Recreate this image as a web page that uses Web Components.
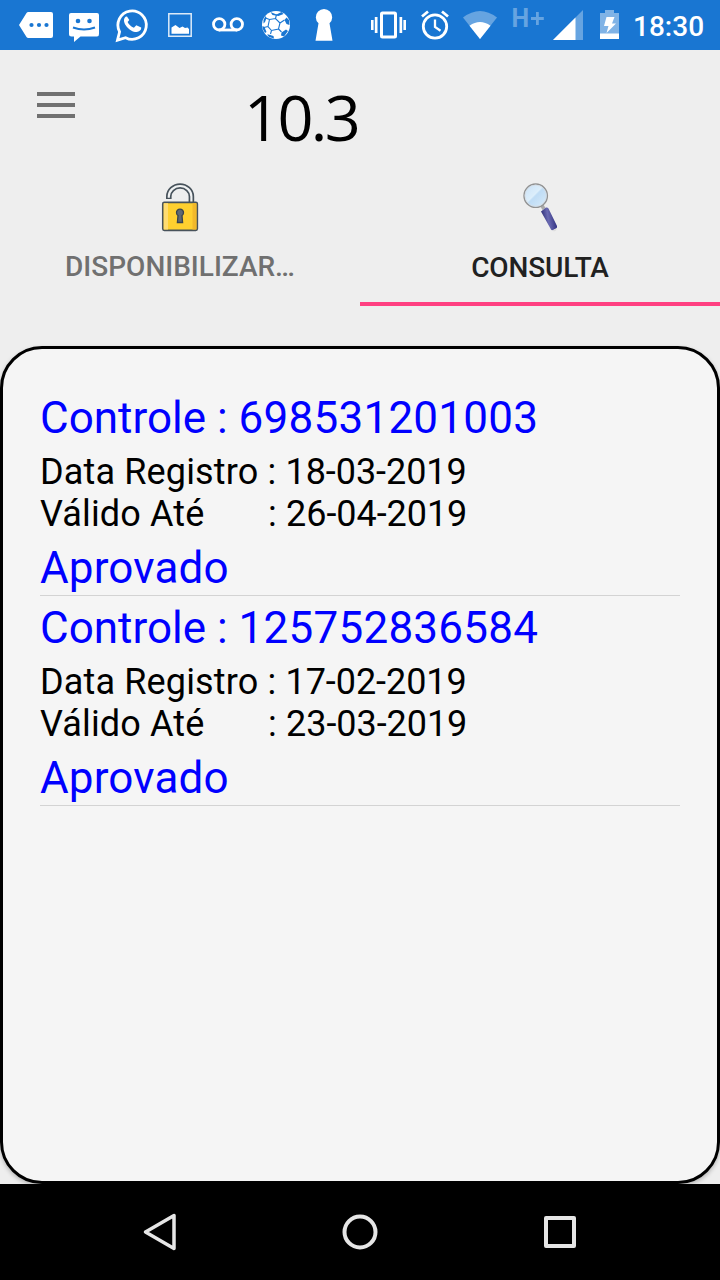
<!DOCTYPE html>
<html lang="pt-BR">
<head>
<meta charset="utf-8">
<title>Consulta</title>
<style>
  body {
    margin: 0;
    background: #eee;
    font-family: Roboto, "Liberation Sans", sans-serif;
  }
</style>
</head>
<body>
<app-screen>
  <status-bar slot="status" time="18:30"></status-bar>
  <app-header slot="header">10.3</app-header>
  <tab-bar slot="tabs">
    <tab-item icon="lock">DISPONIBILIZAR…</tab-item>
    <tab-item icon="search" active>CONSULTA</tab-item>
  </tab-bar>
  <control-list>
    <control-item number="698531201003" registered="18-03-2019" valid="26-04-2019">Aprovado</control-item>
    <control-item number="125752836584" registered="17-02-2019" valid="23-03-2019">Aprovado</control-item>
  </control-list>
  <nav-bar slot="nav"></nav-bar>
</app-screen>

<script>
// Full phone screen: fixed bars, the content takes what is left
class AppScreen extends HTMLElement {
  constructor() {
    super();
    this.attachShadow({ mode: 'open' });
    this.shadowRoot.innerHTML = `
      <style>
        :host {
          display: flex;
          flex-direction: column;
          width: 720px;
          height: 1280px;
          overflow: hidden;
          background: #eee;
        }
        main { flex: 1; display: flex; padding-top: 40px; overflow: hidden; }
      </style>
      <slot name="status"></slot>
      <slot name="header"></slot>
      <slot name="tabs"></slot>
      <main><slot></slot></main>
      <slot name="nav"></slot>
    `;
  }
}

class StatusBar extends HTMLElement {
  constructor() {
    super();
    this.attachShadow({ mode: 'open' });
    this.shadowRoot.innerHTML = `
      <style>
        :host {
          display: flex;
          height: 50px;
          box-sizing: border-box;
          padding: 0 16px 0 12px;
          background: #1976d2;
          color: #fff;
        }
        .group { display: flex; }
        .system { margin-left: auto; }
        svg { display: block; height: 50px; fill: #fff; }
        .line { fill: none; stroke: #fff; }
        .dim { fill: #66a4e1; }
        .cut { fill: #1976d2; }
        .time { font-size: 28px; font-weight: 500; line-height: 53px; width: 71px; white-space: nowrap; }
        text { font: 700 25px Roboto, sans-serif; }
      </style>
      <div class="group">
        <!-- more messages -->
        <svg width="48" viewBox="0 0 48 50"><path d="M7 25l7.5-12Q15 12 16.5 12H39q2 0 2 2v22q0 2-2 2H16.5q-1.500 0-2-1z"/><g class="cut"><circle cx="19.500" cy="25" r="2.100"/><circle cx="27" cy="25" r="2.100"/><circle cx="34.500" cy="25" r="2.100"/></g></svg>
        <!-- sms smile -->
        <svg width="48" viewBox="0 0 48 50"><path d="M11 13h26q2 0 2 2v19q0 2.500-2 2.500H20.500L14 42v-5.500h-2.500q-2.500 0-2.500-2.500V15q0-2 2-2z"/><circle class="cut" cx="18" cy="21" r="2.300"/><circle class="cut" cx="29.500" cy="21" r="2.300"/><path d="M13 27.500q11 4 22 0" fill="none" stroke="#1976d2" stroke-width="2"/></svg>
        <!-- whatsapp -->
        <svg width="48" viewBox="0 0 48 50"><path class="line" stroke-width="2.800" d="M10.200 40.200l2.100-8.400A14.200 14.200 0 1 1 18.300 37.700z" transform="translate(-.7 0)"/><path d="M19 16.500q-1.300-.3-2.300 1.200c-3.200 5 5 14.500 12 14.300 2.600-.1 4.800-2 4.500-4.400l-4.900-2.400-2.400 2.500c-3-1-5.200-3.300-6.300-5.700l1.700-2.100z"/></svg>
        <!-- picture -->
        <svg width="48" viewBox="0 0 48 50"><path class="line" stroke-width="1.500" opacity=".85" d="M12.800 13.800h22.400v22.400H12.800z"/><path d="M15.500 33.800v-6.300l4-2.500 4 3 3-1.500 2.500 1.500 2.500-.5 1.500 1.500v4.800z"/></svg>
        <!-- voicemail -->
        <svg width="48" viewBox="0 0 48 50"><g class="line" stroke-width="2.800"><circle cx="15.200" cy="24.300" r="5.700"/><circle cx="32.800" cy="24.300" r="5.700"/><path d="M15 30h18"/></g></svg>
        <!-- football -->
        <svg width="48" viewBox="0 0 48 50"><circle cx="24" cy="25" r="14"/><g fill="none" stroke="#1976d2" stroke-width="1.100"><path d="M17.500 19.500l6-1 4.500 4.500-1.500 6-7 1.500-3.500-4zM23.500 18.500l1-4M28 23l4.500-3M26.500 29l3 3M19.500 30.500l-1 3.500M16 26.500l-4 1M17.500 19.500l-4-1.500"/></g><path class="cut" d="M18.500 12l6 2.500 5-2.500 2 2-5 2-6-1zM32.500 20l2-2.500 2.500 2.500.5 5-3-1zM29.500 32.500l4.500-3 2 1.500-4 5.500-3-1zM16.500 34.500l5 1.500.5 2.500-5-1.500-2-2.500zM10.500 26l2 1 2 5-1.500 1-2.500-4.500zM11.500 20l2-4 1 2-1.500 4-1.500 1.500z"/></svg>
        <!-- keyhole -->
        <svg width="48" viewBox="0 0 48 50"><path d="M18.500 23.300a8.200 8.200 0 1 1 11 0l3 17.500h-17z"/></svg>
      </div>
      <div class="group system">
        <!-- vibrate -->
        <svg width="46" viewBox="1 0 46 50"><path class="line" stroke-width="3" d="M17.500 14q0-1 1-1h12q1 0 1 1v22q0 1-1 1h-12q-1 0-1-1z"/><path d="M7 20h2.600v10H7zM10.800 17h2.700v16h-2.700zM35.500 17h2.700v16h-2.700zM39.400 20H42v10h-2.600z"/></svg>
        <!-- alarm -->
        <svg width="46" viewBox="0 0 46 50"><g class="line" stroke-width="2.800"><circle cx="24" cy="26.500" r="11.700"/><path stroke-width="2.300" d="M24 19.500V27l5.500 3.800"/><path d="M11 16.500l6-5M37 16.500l-6-5"/></g></svg>
        <!-- wifi -->
        <svg width="46" viewBox="0 0 46 50"><path class="dim" d="M6 17.500q17-13 34 0L23 39z"/><path d="M12.500 25.700q10.500-7.500 21 0L23 39z"/></svg>
        <!-- mobile data -->
        <svg width="84" viewBox="0 0 84 50"><text class="dim" x="8.500" y="27">H</text><path class="dim" d="M33 12h2.800v5h5v3h-5v5H33v-5h-5v-3h5z"/><path class="dim" d="M80 10v30H50z"/><path d="M72.500 17.500V40H50z"/></svg>
        <!-- charging battery -->
        <svg width="46" viewBox="0 0 46 50"><path fill="#80b3e6" d="M18 10h9v3h5v26H13V13h5z"/><path d="M13 33.500h19V39H13zM19.500 17h8l-2.500 6.500h4L19.500 33l2-7H17z"/></svg>
        <span class="time"></span>
      </div>
    `;
    this.$time = this.shadowRoot.querySelector('.time');
  }

  connectedCallback() {
    this.$time.textContent = this.getAttribute('time');
  }
}

class AppHeader extends HTMLElement {
  constructor() {
    super();
    this.attachShadow({ mode: 'open' });
    this.shadowRoot.innerHTML = `
      <style>
        :host { display: flex; align-items: flex-start; height: 112px; padding-left: 37px; }
        .menu { display: grid; gap: 7px; width: 38px; padding-top: 42px; }
        .menu i { height: 4px; background: #707070; }
        .title {
          margin-left: 169px;
          padding-top: 23px;
          font: 63px/88px "Open Sans", "Noto Sans", sans-serif;
          letter-spacing: -2.600px;
          color: #000;
        }
      </style>
      <div class="menu"><i></i><i></i><i></i></div>
      <div class="title"><slot></slot></div>
    `;
  }
}

class TabBar extends HTMLElement {
  constructor() {
    super();
    this.attachShadow({ mode: 'open' });
    this.shadowRoot.innerHTML = `
      <style>
        :host { display: grid; grid-template-columns: 1fr 1fr; height: 144px; }
      </style>
      <slot></slot>
    `;
  }
}

const TAB_ICONS = {
  lock: `
    <svg width="48" height="52" viewBox="0 0 48 52">
      <path d="M12.800 17v-2.500a11.300 10.500 0 0 1 22.600 0V21" fill="none" stroke="#47525b" stroke-width="5.600"/>
      <path d="M12.800 15.800v-1.300a11.300 10.500 0 0 1 22.600 0V21" fill="none" stroke="#f0f2f3" stroke-width="2.200"/>
      <rect x="6.800" y="20.300" width="34.500" height="28" rx="1.500" fill="#ffd02f" stroke="#47525b" stroke-width="1.700"/>
      <path d="M7.700 21.200H12v26.300H7.700z" fill="#ffdc70"/>
      <path d="M36.500 21.200h4v26.300h-4z" fill="#f2b92b"/>
      <path d="M22 33.500a3.500 3.500 0 1 1 4 0l.6 7h-5.200z" fill="#5f6974" stroke="#38434c" stroke-width="1.300"/>
    </svg>`,
  search: `
    <svg width="48" height="52" viewBox="0 0 48 52">
      <defs>
        <linearGradient id="glass" x1="0" y1="0" x2="1" y2="1">
          <stop offset="0" stop-color="#c8e0f7"/><stop offset=".45" stop-color="#dceefb"/><stop offset=".5" stop-color="#bfdcf5"/><stop offset="1" stop-color="#d9ecfa"/>
        </linearGradient>
        <linearGradient id="grip" x1="0" y1=".6" x2="1" y2=".4">
          <stop offset="0" stop-color="#25256e"/><stop offset=".45" stop-color="#6a6ab2"/><stop offset="1" stop-color="#29297a"/>
        </linearGradient>
      </defs>
      <path d="M25 22l3 5" stroke="#aaa" stroke-width="3.500"/>
      <circle cx="19.700" cy="13.700" r="11.700" fill="url(#glass)" stroke="#929292" stroke-width="1.400"/>
      <circle cx="19.700" cy="13.700" r="10.600" fill="none" stroke="#d5dce2" stroke-width=".8"/>
      <path d="M25 29.500l5-4q1.500-.5 2.500 1l8.500 17.500q.5 1.500-1 2.500l-3 1.500q-1.500.5-2-.5z" fill="url(#grip)"/>
      <path d="M36.500 48.500l4.500-2.500-1 2.500-2 1z" fill="#ddd"/>
    </svg>`
};

class TabItem extends HTMLElement {
  constructor() {
    super();
    this.attachShadow({ mode: 'open' });
    this.shadowRoot.innerHTML = `
      <style>
        :host {
          display: flex;
          flex-direction: column;
          align-items: center;
          box-sizing: border-box;
          padding-top: 20px;
          color: #707070;
          border-bottom: 4px solid transparent;
        }
        :host([active]) { color: #212121; border-color: #ff4081; }
        .icon { height: 52px; }
        .label { margin-top: 16px; font-size: 28px; font-weight: 500; line-height: 33px; }
        :host([active]) .label { margin-top: 17px; letter-spacing: -.15px; }
      </style>
      <div class="icon"></div>
      <div class="label"><slot></slot></div>
    `;
  }

  connectedCallback() {
    this.shadowRoot.querySelector('.icon').innerHTML = TAB_ICONS[this.getAttribute('icon')] || '';
  }
}

// Rounded panel that holds the records
class ControlList extends HTMLElement {
  constructor() {
    super();
    this.attachShadow({ mode: 'open' });
    this.shadowRoot.innerHTML = `
      <style>
        :host {
          display: block;
          flex: 1;
          box-sizing: border-box;
          padding: 37px 37px 0;
          background: #f5f5f5;
          border: 3px solid #000;
          border-radius: 42px;
          box-shadow: 0 2px 4px rgba(0, 0, 0, .25);
        }
      </style>
      <slot></slot>
    `;
  }
}

class ControlItem extends HTMLElement {
  constructor() {
    super();
    this.attachShadow({ mode: 'open' });
    this.shadowRoot.innerHTML = `
      <style>
        :host {
          display: block;
          box-sizing: border-box;
          height: 210px;
          padding-top: 6px;
          border-bottom: 1px solid #d3d3d3;
          color: #000;
        }
        .blue { font-size: 44px; line-height: 52px; color: #00f; }
        .number { letter-spacing: .25px; }
        .status { letter-spacing: .15px; }
        .dates { padding: 7px 0; font-size: 36px; line-height: 42px; }
        .dates div { white-space: pre; }
        .dates span { letter-spacing: -.05px; }
        .dates .label { letter-spacing: .15px; }
      </style>
      <div class="blue">Controle : <span class="number"></span></div>
      <div class="dates">
        <div><span class="label">Data Registro : </span><span class="registered"></span></div>
        <div><span class="label">Válido Até       : </span><span class="valid"></span></div>
      </div>
      <div class="blue status"><slot></slot></div>
    `;
  }

  connectedCallback() {
    for (const field of ['number', 'registered', 'valid']) {
      this.shadowRoot.querySelector(`.${field}`).textContent = this.getAttribute(field);
    }
  }
}

class NavBar extends HTMLElement {
  constructor() {
    super();
    this.attachShadow({ mode: 'open' });
    this.shadowRoot.innerHTML = `
      <style>
        :host {
          display: flex;
          justify-content: center;
          align-items: center;
          gap: 152px;
          height: 96px;
          background: #000;
        }
        svg { fill: none; stroke: #e6e6e6; stroke-width: 4; stroke-linejoin: round; }
      </style>
      <svg width="48" height="48" viewBox="0 0 48 48"><path d="M9.500 24L38 7.500v33z" stroke-width="3.500"/></svg>
      <svg width="48" height="48" viewBox="0 0 48 48"><circle cx="24" cy="24" r="15.500"/></svg>
      <svg width="48" height="48" viewBox="0 0 48 48"><path d="M10 10h28v28H10z"/></svg>
    `;
  }
}

customElements.define('app-screen', AppScreen);
customElements.define('status-bar', StatusBar);
customElements.define('app-header', AppHeader);
customElements.define('tab-bar', TabBar);
customElements.define('tab-item', TabItem);
customElements.define('control-list', ControlList);
customElements.define('control-item', ControlItem);
customElements.define('nav-bar', NavBar);
</script>
</body>
</html>
